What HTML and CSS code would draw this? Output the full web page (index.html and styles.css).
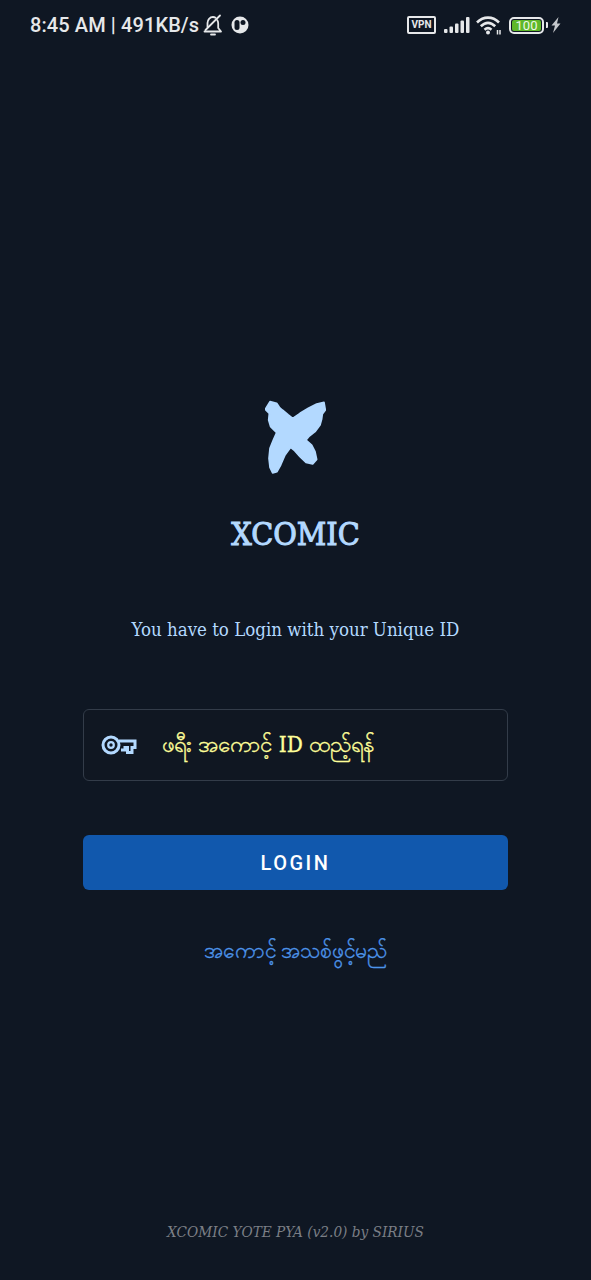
FILE: index.html
```html
<!DOCTYPE html>
<html lang="my">
<head>
<meta charset="utf-8">
<title>XCOMIC</title>
<link rel="stylesheet" href="styles.css">
</head>
<body>
<div class="screen">
  <header class="status">
    <div class="status-left">
      <span class="status-text">8:45 AM | 491KB/s</span>
      <svg class="ic-bell" width="20" height="22" viewBox="0 0 20 22" fill="none" stroke="#e6e8ea" stroke-width="1.800" stroke-linejoin="round" stroke-linecap="round"><path d="M1.500 17.500h16.500l-2.800-3.500V9.500c0-1.200-.3-2.300-.9-3.200M12.500 3.800C11.800 3.300 11 3 10 3 6.800 3 4.500 5.800 4.500 9v4"/><path d="M8 20.500h4"/><path d="M2.500 16 17 1.500"/></svg>
      <svg class="ic-circle" width="18" height="18" viewBox="0 0 18 18"><circle cx="9" cy="9" r="8.500" fill="#e6e8ea"/><path d="M3.500 6.500a2.500 2.500 0 0 1 5 0v5a2.500 2.500 0 0 1-5 0Z" fill="#0f1723"/><circle cx="12" cy="6.500" r="2.500" fill="#0f1723"/></svg>
    </div>
    <div class="status-right">
      <span class="vpn">VPN</span>
      <svg class="ic-signal" width="26" height="16" viewBox="0 0 26 16" fill="#e6e8ea"><rect x="0" y="12" width="3.500" height="4" rx="1"/><rect x="5.500" y="9.500" width="3.500" height="6.500" rx="1"/><rect x="11" y="6.500" width="3.500" height="9.500" rx="1"/><rect x="16.500" y="3.500" width="3.500" height="12.500" rx="1"/><rect x="22" y="0" width="3.500" height="16" rx="1"/></svg>
      <svg class="ic-wifi" width="26" height="20" viewBox="0 0 26 20" fill="none" stroke="#e6e8ea" stroke-width="2.600"><path d="M1 7.500C7.500 1 16.500 1 23 7.500"/><path d="M4.800 11.300C9.500 6.800 14.500 6.800 19.200 11.300"/><path d="M8.500 14.800C11 12.500 13 12.500 15.500 14.800"/><circle cx="12" cy="17.500" r="2" fill="#e6e8ea" stroke="none"/><path d="M21.500 15v4.500M24 15v4.500" stroke-width="1.500"/></svg>
      <span class="battery"><span class="battery-fill">100</span></span>
      <span class="battery-cap"></span>
      <svg class="ic-bolt" width="10" height="16" viewBox="0 0 10 16" fill="#c4c7cb"><path d="M7.500 0 .5 8.500h3.500l-2 7.500L9.500 6.500H6Z"/></svg>
    </div>
  </header>

  <main class="login">
    <svg class="logo" width="61" height="74" viewBox="135 30 183 222" fill="#b3d9ff"><path d="M150 35 170 40 178 52 187 60 205 75 218 85 240 70 265 55 290 42 312 37 316 60 307 72 305 87 300 105 285 125 268 138 258 150 275 165 285 185 290 208 278 222 258 217 240 200 222 180 212 172 195 195 182 225 171 245 158 249 150 232 147 205 150 175 160 150 170 128 152 110 146 90 148 70 136 58Z" stroke="#b3d9ff" stroke-width="5" stroke-linejoin="round"/></svg>
    <h1 class="brand">XCOMIC</h1>
    <p class="subtitle">You have to Login with your Unique ID</p>
    <label class="field">
      <svg class="ic-key" width="37" height="24" viewBox="0 0 37 24" fill="none" stroke="#b3d9ff" stroke-width="3"><circle cx="10" cy="12" r="8"/><circle cx="10" cy="12" r="2.800" stroke-width="2.200"/><path d="M18 8h16v6.500h-3v5h-4.500v-5h-2.500v2.500h-4" stroke-linejoin="miter"/></svg>
      <span class="field-text">ဖရီး အကောင့် ID ထည့်ရန်</span>
    </label>
    <button class="btn" type="button">LOGIN</button>
    <a class="register">အကောင့် အသစ်ဖွင့်မည်</a>
  </main>

  <footer class="foot">XCOMIC YOTE PYA (v2.0) by SIRIUS</footer>
</div>
</body>
</html>
```
FILE: styles.css
```css
* { box-sizing: border-box; }
html, body { margin: 0; padding: 0; }
body { background: #0f1723; font-family: "DejaVu Serif Condensed", "DejaVu Serif", serif; }
.screen { width: 591px; height: 1280px; display: flex; flex-direction: column; align-items: center; overflow: hidden; }
.status { width: 100%; height: 50px; flex: none; padding: 0 30px; display: flex; align-items: center; justify-content: space-between; color: #e6e8ea; font-family: Roboto, sans-serif; }
.status-left, .status-right { display: flex; align-items: center; }
.status-text { font-size: 20px; font-weight: 500; letter-spacing: .1px; }
.ic-bell { margin-left: 4px; }
.ic-circle { margin-left: 8px; }
.vpn { width: 29px; height: 18px; border: 2px solid #e6e8ea; border-radius: 2px; font-size: 10px; font-weight: 700; line-height: 14px; text-align: center; }
.ic-signal { margin-left: 8px; }
.ic-wifi { margin-left: 6px; }
.battery { margin-left: 7px; width: 35px; height: 17px; border: 2px solid #e6e8ea; border-radius: 5px; padding: 1px; display: block; }
.battery-fill { display: block; height: 100%; background: #5fb82a; border-radius: 2px; font-size: 13px; line-height: 11px; text-align: center; color: #eef8e6; }
.battery-cap { width: 2px; height: 6px; margin-left: 2px; background: #e6e8ea; border-radius: 0 1px 1px 0; }
.ic-bolt { margin-left: 3px; }
.login { display: flex; flex-direction: column; align-items: center; margin-top: 350px; width: 425px; }
.logo { display: block; }
.brand { margin: 37px 0 0; font-size: 32px; line-height: 46px; font-weight: 400; color: #b3d9ff; -webkit-text-stroke: 1px #b3d9ff; }
.subtitle { margin: 60px 0 0; font-size: 18.5px; line-height: 26px; color: #b3d9ff; }
.field { margin-top: 66px; width: 100%; height: 72px; display: flex; align-items: center; padding: 0 17px; border: 1px solid #333c49; border-radius: 6px; background: #101722; }
.field-text { margin-left: 24px; padding-top: 2px; color: #ffff99; font-size: 22.300px; -webkit-text-stroke: .3px #ffff99; }
.btn { margin-top: 54px; width: 100%; height: 55px; border: 0; border-radius: 6px; background: #1158ad; color: #fff; font-family: Roboto, sans-serif; font-size: 20px; font-weight: 500; letter-spacing: 2.500px; }
.register { margin-top: 46px; color: #4d94ea; font-size: 21px; line-height: 30px; -webkit-text-stroke: .3px #4d94ea; }
.foot { margin-top: auto; margin-bottom: 37px; color: #7b7f86; font-size: 15.200px; line-height: 22px; font-style: italic; }
```
